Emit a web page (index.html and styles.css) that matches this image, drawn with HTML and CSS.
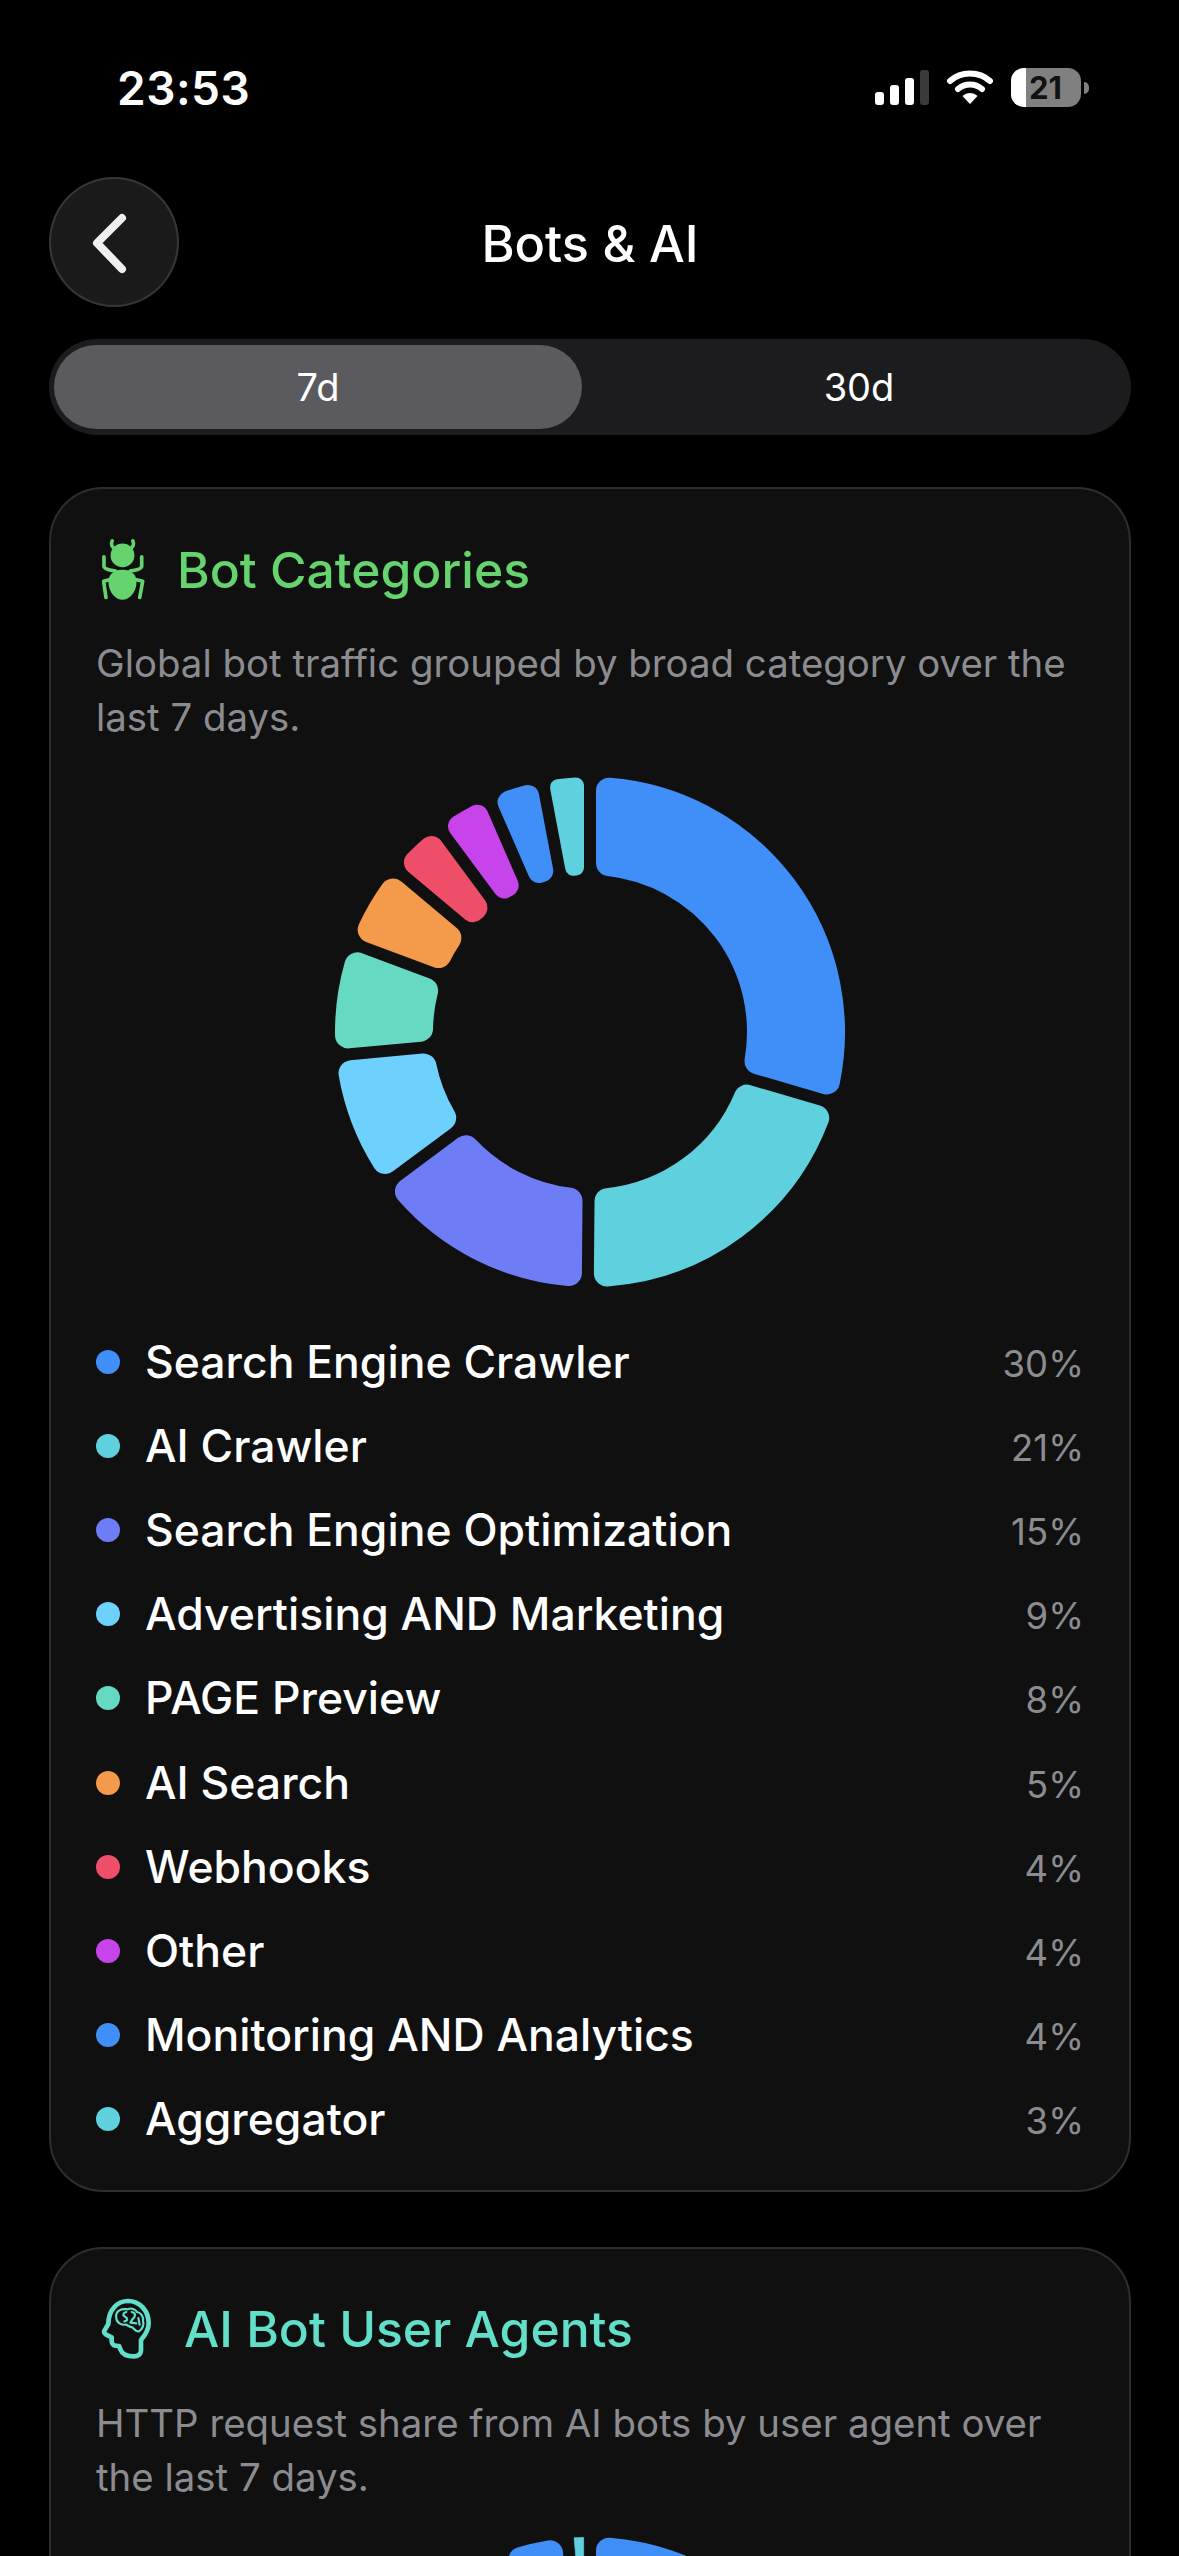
FILE: index.html
```html
<!DOCTYPE html>
<html lang="en">
	<head>
	<meta charset="utf-8">
	<title>Bots &amp; AI</title>
	<link rel="stylesheet" href="styles.css">
	</head>
	<body>
<main class="page">

	<div class="status-bar">
		<span class="time">23:53</span>
		<div class="status-icons">
			<svg class="signal" width="54" height="35" viewBox="0 0 54 35">
				<rect x="0" y="22" width="9" height="13" rx="3" fill="#fff"/>
				<rect x="15" y="15" width="9" height="20" rx="3" fill="#fff"/>
				<rect x="30" y="8" width="9" height="27" rx="3" fill="#fff"/>
				<rect x="45" y="0" width="9" height="35" rx="3" fill="#3a3a3a"/>
			</svg>
			<svg class="wifi" width="46" height="35" viewBox="0 0 46 35">
				<path d="M3 11 C14 1 32 1 43 11" fill="none" stroke="#fff" stroke-width="6" stroke-linecap="round"/>
				<path d="M11 19 C18 13 28 13 35 19" fill="none" stroke="#fff" stroke-width="6" stroke-linecap="round"/>
				<path d="M15.500 26 C20 22 26 22 30.500 26 L23 34 Z" fill="#fff"/>
			</svg>
			<div class="battery">
				<div class="battery-body">
					<div class="battery-fill"></div>
					<span class="battery-level">21</span>
				</div>
				<div class="battery-nub"></div>
			</div>
		</div>
	</div>

	<header class="nav">
		<button class="back" aria-label="Back">
			<svg width="130" height="130" viewBox="0 0 130 130">
				<path d="M73 41 L48 66 L73 92" fill="none" stroke="#f0f0f0" stroke-width="8" stroke-linecap="round" stroke-linejoin="round"/>
			</svg>
		</button>
		<h1 class="nav-title">Bots &amp; AI</h1>
	</header>

	<div class="tabs">
		<button class="tab tab-active">7d</button>
		<button class="tab tab-other">30d</button>
	</div>

	<section class="card">
		<div class="card-head green">
			<svg class="bug-icon" width="48" height="65" viewBox="120 80 145 195">
				<circle cx="191" cy="135" r="36" fill="currentColor"/>
				<path d="M191 178 C225 178 236 200 233 222 C230 250 210 269 191 269 C172 269 152 250 149 222 C146 200 157 178 191 178 Z" fill="currentColor"/>
				<g fill="none" stroke="currentColor" stroke-width="11" stroke-linecap="round" stroke-linejoin="round">
					<path d="M170 115 C158 110 155 102 160 91"/>
					<path d="M212 115 C224 110 227 102 222 91"/>
					<path d="M135 139 L135 168 C136 176 150 179 170 182"/>
					<path d="M249 139 L249 168 C248 176 234 179 214 182"/>
					<path d="M170 203 L134 213 L141 262"/>
					<path d="M212 203 L252 213 L243 262"/>
				</g>
			</svg>
			<h2 class="card-title">Bot Categories</h2>
		</div>
		<p class="card-desc">Global bot traffic grouped by broad category over the last 7 days.</p>
		<svg class="donut" id="botChart" width="512" height="512" viewBox="-256 -256 512 512"></svg>
		<ul class="legend">
			<li class="blue"><span class="dot"></span><span class="legend-name">Search Engine Crawler</span><span class="legend-value">30%</span></li>
			<li class="teal"><span class="dot"></span><span class="legend-name">AI Crawler</span><span class="legend-value">21%</span></li>
			<li class="indigo"><span class="dot"></span><span class="legend-name">Search Engine Optimization</span><span class="legend-value">15%</span></li>
			<li class="sky"><span class="dot"></span><span class="legend-name">Advertising AND Marketing</span><span class="legend-value">9%</span></li>
			<li class="mint"><span class="dot"></span><span class="legend-name">PAGE Preview</span><span class="legend-value">8%</span></li>
			<li class="orange"><span class="dot"></span><span class="legend-name">AI Search</span><span class="legend-value">5%</span></li>
			<li class="red"><span class="dot"></span><span class="legend-name">Webhooks</span><span class="legend-value">4%</span></li>
			<li class="magenta"><span class="dot"></span><span class="legend-name">Other</span><span class="legend-value">4%</span></li>
			<li class="blue"><span class="dot"></span><span class="legend-name">Monitoring AND Analytics</span><span class="legend-value">4%</span></li>
			<li class="teal"><span class="dot"></span><span class="legend-name">Aggregator</span><span class="legend-value">3%</span></li>
		</ul>
	</section>

	<section class="card">
		<div class="card-head mint-title">
			<svg class="brain-icon" width="52" height="62" viewBox="66 24 156 186">
				<path d="M186 150 L186 180 C186 194 176 199 165 199 C145 199 130 194 125 180 L120 168 C104 168 98 164 98 152 L98 142 L80 133 C74 129 74 125 78 119 L88 102 C88 60 115 33 147 33 C182 33 209 62 209 100 C209 120 199 135 186 150 Z" fill="none" stroke="currentColor" stroke-width="14" stroke-linejoin="round"/>
				<g fill="none" stroke="currentColor" stroke-width="6.500" stroke-linecap="round" stroke-linejoin="round">
					<path d="M120 62 C130 54 140 58 146 58 C156 52 170 58 174 66 C186 68 194 80 192 92 C196 104 190 118 180 124 C172 126 166 118 160 112 C150 112 146 104 140 104 C128 106 112 98 112 84 C110 74 114 66 120 62 Z"/>
					<path d="M142 66 C132 68 130 76 138 80 C146 84 148 92 136 94"/>
					<path d="M158 66 C172 68 170 80 160 88 L154 98 L172 100"/>
					<path d="M178 84 L182 104"/>
				</g>
			</svg>
			<h2 class="card-title">AI Bot User Agents</h2>
		</div>
		<p class="card-desc">HTTP request share from AI bots by user agent over the last 7 days.</p>
		<svg class="donut" id="agentChart" width="512" height="512" viewBox="-256 -256 512 512"></svg>
	</section>

</main>
<script src="chart.js"></script>
	</body>
</html>
```

FILE: styles.css
```css
* { box-sizing: border-box; }
html, body { margin: 0; height: 2556px; overflow: hidden; background: #000; }
body { font-family: Inter, "Noto Sans", sans-serif; color: #fff; }
h1, h2, p, ul { margin: 0; padding: 0; }
button { font-family: inherit; color: inherit; border: 0; padding: 0; background: none; }

.page { padding: 68px 48px 0 49px; }

/* status bar */
.status-bar { display: flex; justify-content: space-between; align-items: center; height: 39px; margin: 0 42px 0 68px; }
.time { font-size: 46px; font-weight: 600; letter-spacing: 0.5px; }
.status-icons { display: flex; align-items: center; gap: 18px; }
.signal, .wifi { display: block; }
.battery { display: flex; align-items: center; gap: 3px; }
.battery-body { position: relative; width: 70px; height: 39px; border-radius: 13px; background: #808080; overflow: hidden; display: flex; align-items: center; justify-content: center; }
.battery-fill { position: absolute; left: 0; top: 0; bottom: 0; width: 15px; background: #fff; }
.battery-level { position: relative; font-size: 31px; font-weight: 700; color: #111; padding-left: 18px; width: 100%; }
.battery-nub { width: 5px; height: 12px; background: #808080; border-radius: 0 6px 6px 0; }

/* header */
.nav { position: relative; display: flex; align-items: center; justify-content: center; height: 132px; margin-top: 70px; }
.back { position: absolute; left: 0; top: 0; width: 130px; height: 130px; border-radius: 50%; background: #1a1a1b; box-shadow: inset 0 0 0 2px #363638; }
.back svg { display: block; }
.nav-title { font-size: 50.500px; font-weight: 500; }

/* 7d / 30d */
.tabs { display: grid; grid-template-columns: 528px 1fr; height: 96px; margin-top: 30px; padding: 6px 5px; border-radius: 48px; background: #1c1c1e; }
.tab { font-size: 38px; font-weight: 400; }
.tab-active { background: #5b5b5f; border-radius: 42px; }
.tab-other { padding-left: 10px; }

/* cards */
.card { margin-top: 52px; padding: 50px 45px 28px; border: 2px solid #2e2e30; border-radius: 54px; background: #101011; }
.card + .card { margin-top: 55px; }
.card-head { display: flex; align-items: center; height: 61px; }
.card-title { font-size: 49.800px; font-weight: 500; }
.green { color: #65d46e; }
.mint-title { color: #62dfc9; }
.bug-icon { margin: 0 30px 0 3px; flex: none; }
.brain-icon { margin: 0 31px 0 5px; flex: none; }
.card-desc { margin-top: 36px; font-size: 38.400px; line-height: 54px; color: #8c8c90; }
.donut { display: block; margin: 32px auto 0; }
.donut path { fill: currentColor; stroke: currentColor; stroke-linejoin: round; }

/* legend */
.legend { list-style: none; margin-top: 32px; padding-bottom: 1px; }
.legend li { display: flex; align-items: center; height: 84.100px; }
.dot { flex: none; width: 24px; height: 24px; border-radius: 50%; background: currentColor; }
.legend-name { flex: 1; margin-left: 25px; font-size: 44.500px; font-weight: 500; color: #fff; }
.legend-value { padding-top: 4px; font-size: 36.500px; color: #8c8c90; }

.blue { color: #408ff8; }
.teal { color: #5fd0de; }
.indigo { color: #6e7df5; }
.sky { color: #6ed0fd; }
.mint { color: #66d9c2; }
.orange { color: #f39a4b; }
.red { color: #ee4e68; }
.magenta { color: #c644ea; }
```

FILE: chart.js
```js
(function() {

	var OUTER = 255, INNER = 157, GAP = 12, CORNER = 13;
	var RAD = Math.PI / 180;

	// angle from 12 o'clock, offset sideways so the gaps keep the same width
	function point(r, deg, side) {
		var a = deg * RAD + Math.asin(side / r);
		return (r * Math.sin(a)).toFixed(2) + ' ' + (-r * Math.cos(a)).toFixed(2);
	}

	// the wedge is inset by the corner radius, the stroke grows it back with round joins
	function addSlice(svg, from, to, color) {
		var corner = Math.min(CORNER, ((to - from) * RAD * INNER - GAP) / 2 - 0.5);
		var ro = OUTER - corner, ri = INNER + corner, side = GAP / 2 + corner;
		var path = document.createElementNS('http://www.w3.org/2000/svg', 'path');
		path.setAttribute('d',
			'M' + point(ri, from, side) +
			' L' + point(ro, from, side) +
			' A' + ro + ' ' + ro + ' 0 0 1 ' + point(ro, to, -side) +
			' L' + point(ri, to, -side) +
			' A' + ri + ' ' + ri + ' 0 0 0 ' + point(ri, from, side) + ' Z');
		path.setAttribute('stroke-width', corner * 2);
		path.setAttribute('class', color);
		svg.appendChild(path);
	}

	function draw(id, stops, colors) {
		var svg = document.getElementById(id);
		for (var i = 0; i < colors.length; i++) {
			addSlice(svg, stops[i], stops[i + 1], colors[i]);
		}
	}

	draw('botChart',
		[0, 106.3, 180.5, 233.3, 264.7, 290.5, 310, 323.5, 336.5, 349.3, 360],
		['blue', 'teal', 'indigo', 'sky', 'mint', 'orange', 'red', 'magenta', 'blue', 'teal']);

	draw('agentChart',
		[0, 150, 240, 339, 355, 360],
		['blue', 'teal', 'indigo', 'blue', 'teal']);

}());
```
